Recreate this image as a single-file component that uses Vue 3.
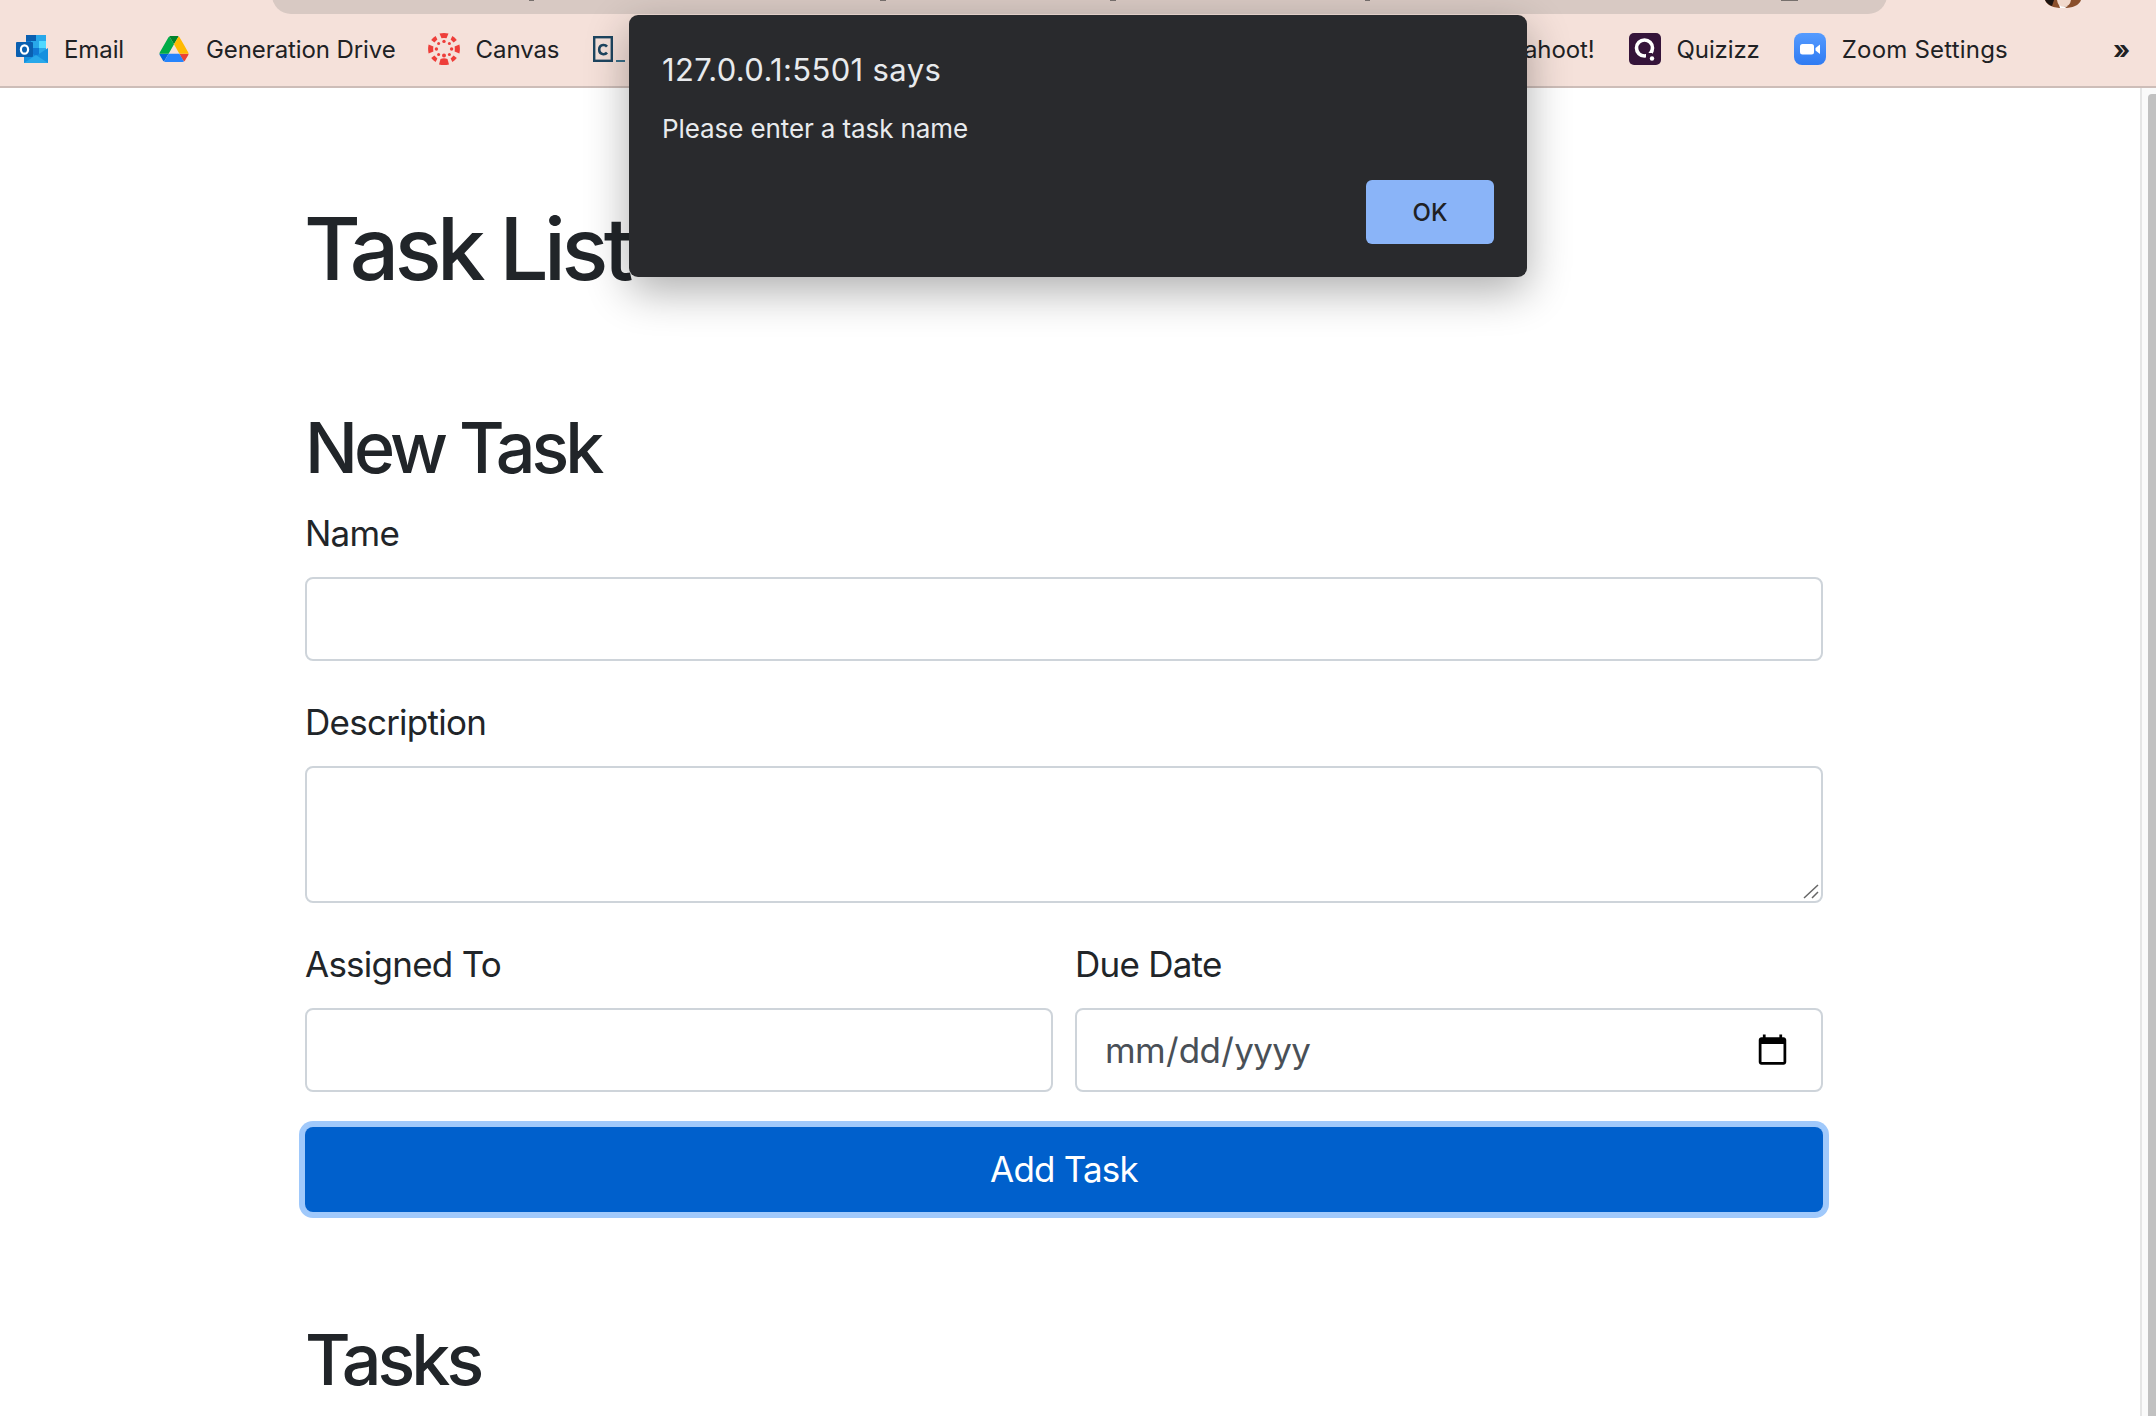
<template>
  <div class="window">
    <header class="chrome">
      <div class="toolbar">
        <div class="omnibox">
          <i class="url-tick" style="left: 257px; width: 5px"></i>
          <i class="url-tick" style="left: 608px; width: 6px"></i>
          <i class="url-tick" style="left: 838px; width: 6px"></i>
          <i class="url-tick" style="left: 1093px; width: 5px"></i>
          <i class="url-tick" style="left: 1509px; width: 17px"></i>
        </div>
        <svg class="avatar" width="36" height="8" viewBox="0 0 36 8">
          <path d="M0 0 H36 Q33 8 18 8 Q3 8 0 0 Z" fill="#8a4f2c" />
          <path d="M0 0 H9 L7 6 Q2 4 0 0 Z" fill="#1c1412" />
          <path d="M12 0 H26 Q25 7 18 7 Q13 7 12 0 Z" fill="#f1d9cc" />
          <path d="M14 5 Q18 8 23 6 L20 8 H15 Z" fill="#fff" />
        </svg>
      </div>
      <nav class="bookmarks">
        <div class="group">
          <a class="mark">
            <svg width="32" height="28" viewBox="0 0 32 28">
              <rect x="10" y="0" width="20" height="22" fill="#0f78d4" />
              <rect x="10" y="0" width="10" height="6" fill="#0a5fb0" />
              <rect x="20" y="0" width="10" height="6" fill="#28a8ea" />
              <rect x="15" y="6" width="8" height="7" fill="#28a8ea" />
              <rect x="23" y="6" width="7" height="7" fill="#50d9ff" />
              <rect x="15" y="13" width="8" height="7" fill="#0f78d4" />
              <rect x="23" y="13" width="7" height="7" fill="#28a8ea" />
              <path d="M8 13 L20 21 L32 13 L32 28 L8 28 Z" fill="#1490df" />
              <path d="M8 28 L20 20 L32 28 Z" fill="#28a8ea" />
              <rect x="0" y="7" width="17" height="15" rx="1" fill="#0a5fb0" />
              <ellipse cx="8.5" cy="14.5" rx="3.6" ry="4.2" fill="none" stroke="#fff" stroke-width="2.2" />
            </svg>
            <span>Email</span>
          </a>
          <a class="mark mark-drive">
            <svg width="30" height="26" viewBox="0 0 87.3 78">
              <path d="m6.6 66.85 3.85 6.65c.8 1.4 1.95 2.5 3.3 3.3l13.75-23.8h-27.5c0 1.55.4 3.1 1.2 4.5z" fill="#0066da" />
              <path d="m43.65 25-13.75-23.8c-1.35.8-2.5 1.9-3.3 3.3l-25.4 44a9.06 9.06 0 0 0 -1.2 4.5h27.5z" fill="#00ac47" />
              <path d="m73.55 76.8c1.35-.8 2.5-1.9 3.3-3.3l1.6-2.75 7.65-13.25c.8-1.4 1.2-2.95 1.2-4.5h-27.502l5.852 11.5z" fill="#ea4335" />
              <path d="m43.65 25 13.75-23.8c-1.35-.8-2.9-1.2-4.5-1.2h-18.5c-1.6 0-3.15.45-4.5 1.2z" fill="#00832d" />
              <path d="m59.8 53h-32.3l-13.75 23.8c1.35.8 2.9 1.2 4.5 1.2h50.8c1.6 0 3.15-.45 4.5-1.2z" fill="#2684fc" />
              <path d="m73.4 26.5-12.7-22c-.8-1.4-1.95-2.5-3.3-3.3l-13.75 23.8 16.15 28h27.45c0-1.55-.4-3.1-1.2-4.5z" fill="#ffba00" />
            </svg>
            <span>Generation Drive</span>
          </a>
          <a class="mark">
            <svg width="32" height="32" viewBox="0 0 32 32" fill="#ee3e3a">
              <path d="M11.5 0.6 Q16 -0.4 20.5 0.6 L18.5 5.2 Q16 4.8 13.5 5.2 Z" />
              <path d="M11 31.4 Q16 32.4 21 31.4 L19.5 26 Q16 24.5 12.5 26 Z" />
              <path d="M0.6 11.5 Q-0.4 16 0.6 20.5 L5.4 18.5 Q5 16 5.4 13.5 Z" />
              <path d="M31.4 11.5 Q32.4 16 31.4 20.5 L26.6 18.5 Q27 16 26.6 13.5 Z" />
              <path d="M3.2 7 Q5 4.6 7.6 3 L9.4 6.6 L6.4 9.6 Z" />
              <path d="M28.8 7 Q27 4.6 24.4 3 L22.6 6.6 L25.6 9.6 Z" />
              <path d="M3.2 25 Q5 27.4 7.6 29 L9.4 25.4 L6.4 22.4 Z" />
              <path d="M28.8 25 Q27 27.4 24.4 29 L22.6 25.4 L25.6 22.4 Z" />
              <circle cx="16" cy="8.4" r="1.7" />
              <circle cx="16" cy="22.6" r="2" />
              <circle cx="8.4" cy="16" r="1.7" />
              <circle cx="23.6" cy="16" r="1.7" />
              <circle cx="10.6" cy="10.6" r="1.5" />
              <circle cx="21.4" cy="10.6" r="1.5" />
              <circle cx="10.6" cy="21.4" r="1.5" />
              <circle cx="21.4" cy="21.4" r="1.5" />
            </svg>
            <span>Canvas</span>
          </a>
          <a class="mark">
            <svg width="32" height="26" viewBox="0 0 32 26">
              <rect x="1.2" y="1.2" width="17.6" height="23.6" fill="none" stroke="#1d4560" stroke-width="2.4" />
              <path d="M14 10.6 Q12.6 8.8 10.2 9 Q6.2 9.4 6.2 13.6 Q6.2 17.8 10.2 18.2 Q12.6 18.4 14 16.6" fill="none" stroke="#1d4560" stroke-width="2.6" />
              <rect x="23" y="24" width="9" height="2" fill="#3a6f8a" />
            </svg>
          </a>
        </div>
        <div class="group group-right">
          <a class="mark">
            <span>Kahoot!</span>
          </a>
          <a class="mark">
            <svg width="32" height="32" viewBox="0 0 32 32">
              <rect width="32" height="32" rx="5" fill="#35143a" />
              <circle cx="15.5" cy="15" r="8" fill="none" stroke="#fff" stroke-width="3.6" />
              <rect x="17" y="20" width="6" height="5" fill="#35143a" />
              <circle cx="23" cy="25.5" r="2.2" fill="#fff" />
            </svg>
            <span>Quizizz</span>
          </a>
          <a class="mark mark-zoom">
            <svg width="32" height="32" viewBox="0 0 32 32">
              <defs>
                <linearGradient id="zoom-bg" x1="0" y1="0" x2="0" y2="1">
                  <stop offset="0" stop-color="#559bff" />
                  <stop offset="1" stop-color="#2f7bf2" />
                </linearGradient>
              </defs>
              <rect width="32" height="32" rx="8" fill="url(#zoom-bg)" />
              <rect x="6" y="11" width="14" height="10.5" rx="2.5" fill="#fff" />
              <path d="M21.5 15 L26 11.5 L26 21 L21.5 17.5 Z" fill="#fff" />
            </svg>
            <span>Zoom Settings</span>
          </a>
        </div>
        <span class="more">»</span>
      </nav>
    </header>

    <main class="page">
      <h1>Task List</h1>

      <section class="section">
        <h2>New Task</h2>
        <form class="form" @submit.prevent>
          <div class="field">
            <label>Name</label>
            <input type="text" />
          </div>
          <div class="field">
            <label>Description</label>
            <div class="area">
              <textarea></textarea>
              <svg class="grip" width="16" height="15" viewBox="0 0 16 15">
                <path d="M1 14 L15 1 M9 14 L15 8" stroke="#666" stroke-width="1.5" fill="none" />
              </svg>
            </div>
          </div>
          <div class="row">
            <div class="field">
              <label>Assigned To</label>
              <input type="text" />
            </div>
            <div class="field">
              <label>Due Date</label>
              <input type="date" />
            </div>
          </div>
          <button class="submit" type="submit">Add Task</button>
        </form>
      </section>

      <section class="section tasks">
        <h2>Tasks</h2>
      </section>
    </main>

    <div class="scrollbar"><div class="thumb"></div></div>

    <div class="dialog" role="alertdialog">
      <div class="dialog-title">127.0.0.1:5501 says</div>
      <div class="dialog-text">Please enter a task name</div>
      <div class="dialog-actions">
        <button class="dialog-ok" type="button">OK</button>
      </div>
    </div>
  </div>
</template>

<script setup>
</script>

<style>
html,
body {
  margin: 0;
  overflow: hidden;
  background: #fff;
}
</style>

<style scoped>
.window {
  position: relative;
  width: 2156px;
  height: 1416px;
  overflow: hidden;
  font-family: Inter, "Liberation Sans", sans-serif;
  color: #212529;
}

/* Browser chrome */
.chrome {
  height: 88px;
  box-sizing: border-box;
  background: #f5e1da;
  border-bottom: 2px solid #cdbdb8;
}
.toolbar {
  position: relative;
  height: 33px;
}
.omnibox {
  position: absolute;
  left: 272px;
  top: -24px;
  width: 1615px;
  height: 38px;
  background: #d8c9c3;
  border-radius: 24px;
}
.url-tick {
  position: absolute;
  bottom: 13px;
  height: 1px;
  background: #77706d;
}
.avatar {
  position: absolute;
  left: 2045px;
  top: 0;
}
.bookmarks {
  height: 32px;
  display: flex;
  align-items: center;
  padding: 0 26px 0 16px;
  font-size: 24px;
  letter-spacing: -0.1px;
  color: #202124;
}
.group {
  display: flex;
  align-items: center;
  gap: 34px;
}
.group-right {
  margin-left: auto;
}
.mark {
  display: flex;
  align-items: center;
  gap: 16px;
  white-space: nowrap;
}
.mark-drive {
  margin: 0 -2px 0 1px;
  gap: 17px;
}
.mark-zoom {
  letter-spacing: 0.2px;
}
.more {
  margin-left: 105px;
  font-size: 26px;
  font-weight: 700;
}

/* Page content */
.page {
  padding: 109px 0 0 305px;
  width: 1518px;
}
h1 {
  margin: 0 0 0 -1px;
  font-size: 87px;
  font-weight: 530;
  line-height: 104px;
  letter-spacing: -4.6px;
}
h2 {
  margin: 0 0 17px;
  font-size: 70px;
  font-weight: 530;
  line-height: 84px;
  letter-spacing: -3.9px;
}
.section {
  margin-top: 105px;
}
.section.tasks {
  margin-top: 106px;
}
.form {
  display: flex;
  flex-direction: column;
  gap: 35px;
}
.field {
  display: flex;
  flex-direction: column;
  gap: 18px;
  min-width: 0;
}
label {
  font-size: 35px;
  line-height: 52px;
  letter-spacing: -0.75px;
}
.row {
  display: grid;
  grid-template-columns: 1fr 1fr;
  gap: 22px;
}
input,
textarea {
  box-sizing: border-box;
  width: 100%;
  height: 84px;
  padding: 0 29px 0 27px;
  border: 2px solid #ced4da;
  border-radius: 8px;
  background: #fff;
  font-family: inherit;
  font-size: 35px;
  letter-spacing: -0.7px;
  color: #495057;
}
.area {
  position: relative;
}
textarea {
  display: block;
  height: 137px;
  resize: none;
}
.grip {
  position: absolute;
  right: 4px;
  bottom: 4px;
}
.submit {
  height: 85px;
  padding: 0 0 2px;
  border: 0;
  border-radius: 8px;
  background: #0060cc;
  box-shadow: 0 0 0 6px #a0c9fb;
  font-family: inherit;
  font-size: 35px;
  letter-spacing: -0.8px;
  color: #fff;
}

/* Scrollbar */
.scrollbar {
  position: absolute;
  right: 0;
  top: 88px;
  bottom: 0;
  width: 14px;
  background: #fafafa;
  border-left: 2px solid #e5e5e5;
}
.thumb {
  position: absolute;
  top: 6px;
  bottom: 0;
  left: 6px;
  right: 0;
  background: #c1c1c1;
  border-radius: 4px 0 0 0;
}

/* Alert dialog */
.dialog {
  position: absolute;
  left: 629px;
  top: 15px;
  width: 898px;
  height: 262px;
  box-sizing: border-box;
  padding: 38px 33px 0 33px;
  background: #292a2d;
  border-radius: 9px;
  box-shadow: 0 14px 44px rgba(0, 0, 0, 0.32);
  color: #e8eaed;
}
.dialog-title {
  font-size: 31px;
  line-height: 34px;
  letter-spacing: 0.35px;
}
.dialog-text {
  margin-top: 25px;
  font-size: 26px;
  line-height: 34px;
  letter-spacing: -0.1px;
}
.dialog-actions {
  display: flex;
  justify-content: flex-end;
  margin-top: 34px;
}
.dialog-ok {
  width: 128px;
  height: 64px;
  border: 0;
  border-radius: 6px;
  background: #8ab4f8;
  font-family: inherit;
  font-size: 24px;
  font-weight: 500;
  color: #202124;
}
</style>
